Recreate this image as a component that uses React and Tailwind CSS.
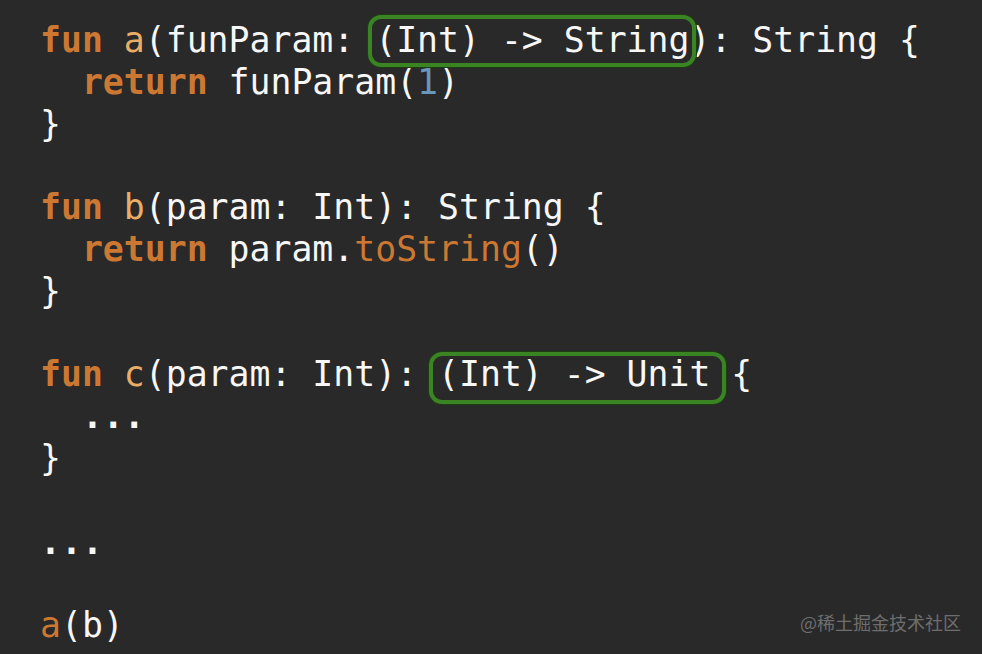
import React from "react";

const K = ({ children }) => <span className="font-bold text-[#cc7832]">{children}</span>;
const F = ({ children }) => <span className="text-[#e9ad66]">{children}</span>;
const O = ({ children }) => <span className="text-[#cc7832]">{children}</span>;
const N = ({ children }) => <span className="text-[#6897bb]">{children}</span>;

export default function App() {
  const lines = [
    <><K>fun</K> <F>a</F>(funParam: (Int) -&gt; String): String {"{"}</>,
    <>  <K>return</K> funParam(<N>1</N>)</>,
    <>{"}"}</>,
    <> </>,
    <><K>fun</K> <F>b</F>(param: Int): String {"{"}</>,
    <>  <K>return</K> param.<O>toString</O>()</>,
    <>{"}"}</>,
    <> </>,
    <><K>fun</K> <F>c</F>(param: Int): (Int) -&gt; Unit {"{"}</>,
    <>  <span className="font-bold">...</span></>,
    <>{"}"}</>,
    <> </>,
    <><span className="font-bold">...</span></>,
    <> </>,
    <><O>a</O>(b)</>,
  ];
  return (
    <div className="relative w-[982px] h-[654px] overflow-hidden bg-[#292929]">
      <div className="pl-[40px] pt-[20px] whitespace-pre text-[34.8px] leading-[41.8px] text-[#f7f7f7] font-['DejaVu_Sans_Mono',monospace]">
        {lines.map((l, i) => (
          <div key={i} className="h-[41.8px]">{l}</div>
        ))}
      </div>
      <div className="absolute left-[368px] top-[15px] w-[328px] h-[52px] rounded-[13px] border-[4px] border-[#3a8424] shadow-[0_0_0_1px_#1d3d12]" />
      <div className="absolute left-[429px] top-[352px] w-[297px] h-[52px] rounded-[13px] border-[4px] border-[#3a8424] shadow-[0_0_0_1px_#1d3d12]" />
      <div className="absolute left-[800px] top-[609px] text-[18px] leading-[26px] text-[#6e6e6e] font-['Noto_Sans_CJK_SC',sans-serif]">
        @稀土掘金技术社区
      </div>
    </div>
  );
}
